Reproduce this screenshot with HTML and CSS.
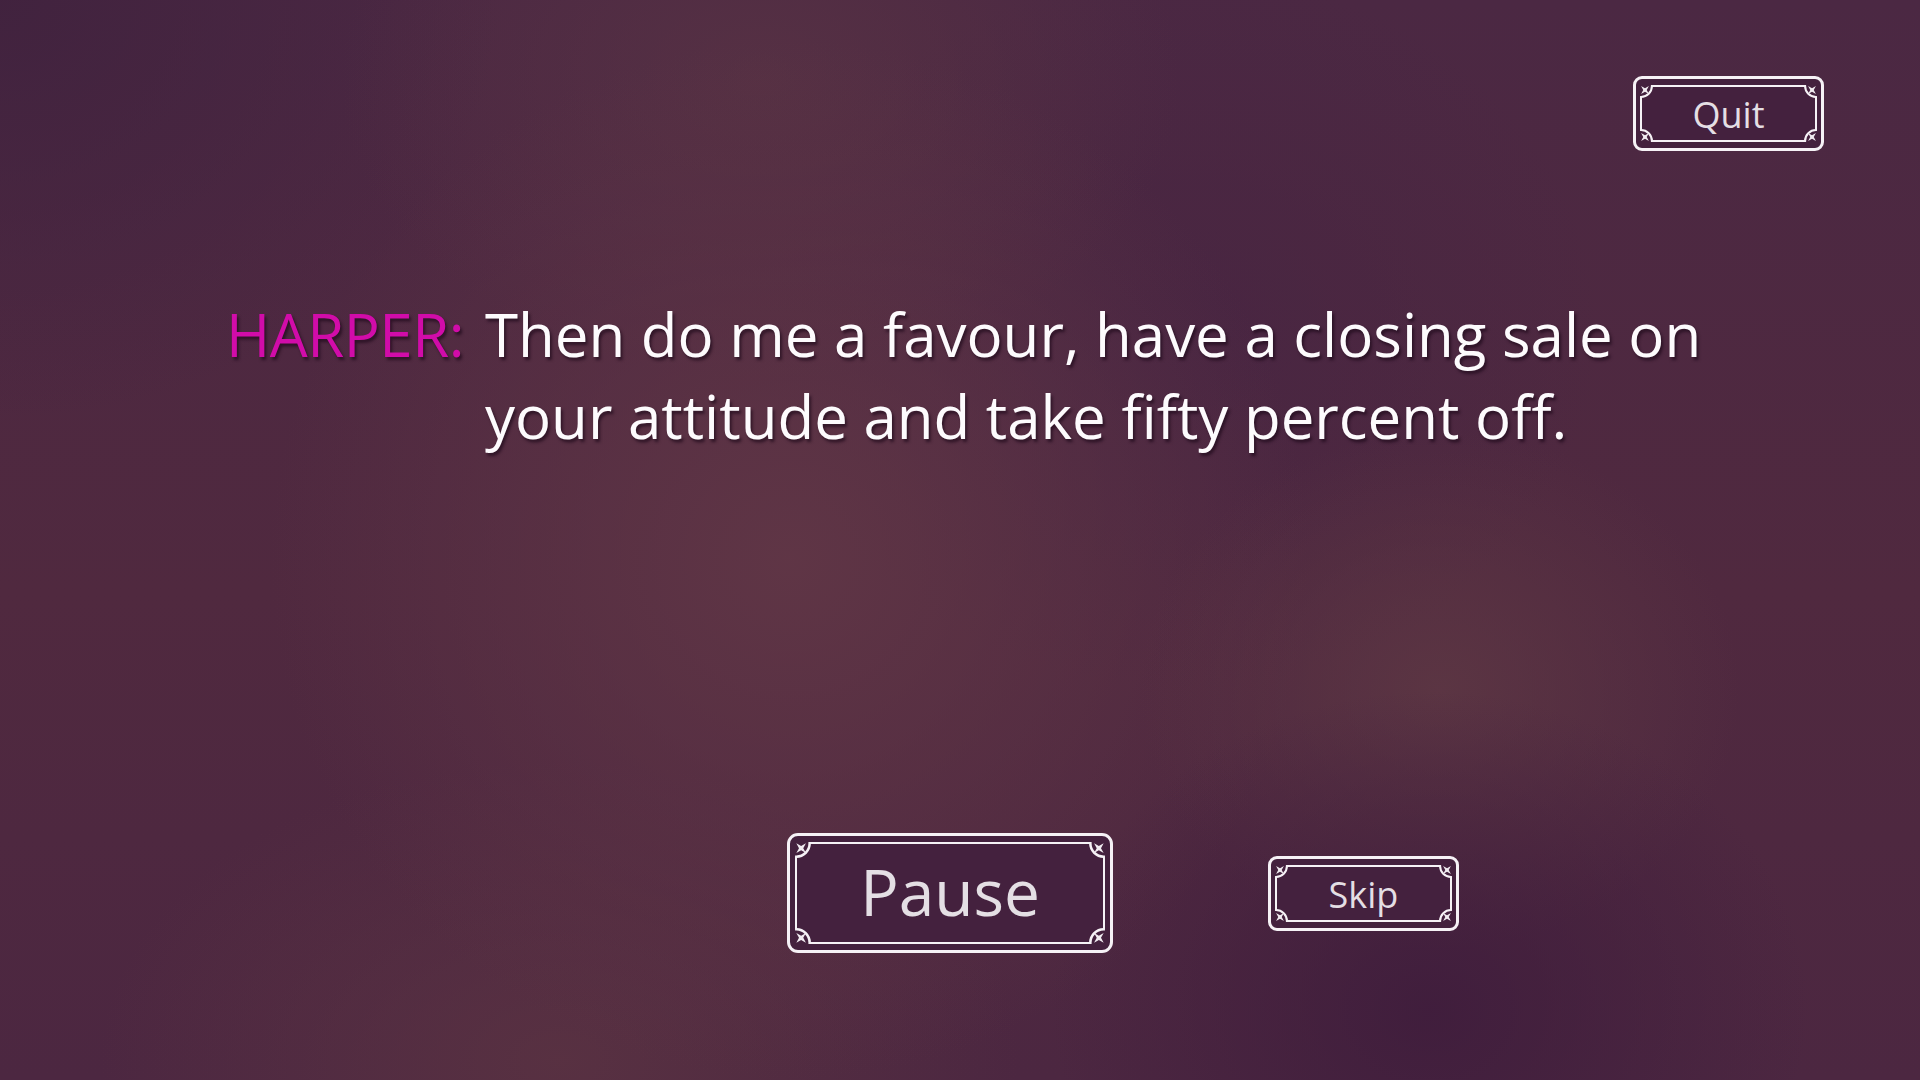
FILE: index.html
```html
<!DOCTYPE html>
<html lang="en">
<head>
<meta charset="utf-8">
<title>Harper</title>
<link rel="stylesheet" href="styles.css">
</head>
<body>
<div class="screen">
  <header class="topbar">
    <button class="frame-btn small" type="button">
      <span class="frame-inner">
        <span class="label">Quit</span>
        <svg class="orn tl" viewBox="0 0 12 12"><rect width="11" height="11"/><path class="arc" d="M11 1 A10 10 0 0 1 1 11"/><path class="star" d="M1 1 L4.6 3 L8.2 1 L6.2 4.6 L8.2 8.2 L4.6 6.2 L1 8.2 L3 4.6 Z"/></svg>
        <svg class="orn tr" viewBox="0 0 12 12"><rect width="11" height="11"/><path class="arc" d="M11 1 A10 10 0 0 1 1 11"/><path class="star" d="M1 1 L4.6 3 L8.2 1 L6.2 4.6 L8.2 8.2 L4.6 6.2 L1 8.2 L3 4.6 Z"/></svg>
        <svg class="orn bl" viewBox="0 0 12 12"><rect width="11" height="11"/><path class="arc" d="M11 1 A10 10 0 0 1 1 11"/><path class="star" d="M1 1 L4.6 3 L8.2 1 L6.2 4.6 L8.2 8.2 L4.6 6.2 L1 8.2 L3 4.6 Z"/></svg>
        <svg class="orn br" viewBox="0 0 12 12"><rect width="11" height="11"/><path class="arc" d="M11 1 A10 10 0 0 1 1 11"/><path class="star" d="M1 1 L4.6 3 L8.2 1 L6.2 4.6 L8.2 8.2 L4.6 6.2 L1 8.2 L3 4.6 Z"/></svg>
      </span>
    </button>
  </header>

  <section class="dialog">
    <span class="speaker">HARPER:</span>
    <p class="line">Then do me a favour, have a closing sale on your attitude and take fifty percent off.</p>
  </section>

  <nav class="controls">
    <button class="frame-btn large" type="button">
      <span class="frame-inner">
        <span class="label">Pause</span>
        <svg class="orn tl" viewBox="0 0 12 12"><rect width="11" height="11"/><path class="arc" d="M11 1 A10 10 0 0 1 1 11"/><path class="star" d="M1 1 L4.6 3 L8.2 1 L6.2 4.6 L8.2 8.2 L4.6 6.2 L1 8.2 L3 4.6 Z"/></svg>
        <svg class="orn tr" viewBox="0 0 12 12"><rect width="11" height="11"/><path class="arc" d="M11 1 A10 10 0 0 1 1 11"/><path class="star" d="M1 1 L4.6 3 L8.2 1 L6.2 4.6 L8.2 8.2 L4.6 6.2 L1 8.2 L3 4.6 Z"/></svg>
        <svg class="orn bl" viewBox="0 0 12 12"><rect width="11" height="11"/><path class="arc" d="M11 1 A10 10 0 0 1 1 11"/><path class="star" d="M1 1 L4.6 3 L8.2 1 L6.2 4.6 L8.2 8.2 L4.6 6.2 L1 8.2 L3 4.6 Z"/></svg>
        <svg class="orn br" viewBox="0 0 12 12"><rect width="11" height="11"/><path class="arc" d="M11 1 A10 10 0 0 1 1 11"/><path class="star" d="M1 1 L4.6 3 L8.2 1 L6.2 4.6 L8.2 8.2 L4.6 6.2 L1 8.2 L3 4.6 Z"/></svg>
      </span>
    </button>
    <button class="frame-btn small" type="button">
      <span class="frame-inner">
        <span class="label">Skip</span>
        <svg class="orn tl" viewBox="0 0 12 12"><rect width="11" height="11"/><path class="arc" d="M11 1 A10 10 0 0 1 1 11"/><path class="star" d="M1 1 L4.6 3 L8.2 1 L6.2 4.6 L8.2 8.2 L4.6 6.2 L1 8.2 L3 4.6 Z"/></svg>
        <svg class="orn tr" viewBox="0 0 12 12"><rect width="11" height="11"/><path class="arc" d="M11 1 A10 10 0 0 1 1 11"/><path class="star" d="M1 1 L4.6 3 L8.2 1 L6.2 4.6 L8.2 8.2 L4.6 6.2 L1 8.2 L3 4.6 Z"/></svg>
        <svg class="orn bl" viewBox="0 0 12 12"><rect width="11" height="11"/><path class="arc" d="M11 1 A10 10 0 0 1 1 11"/><path class="star" d="M1 1 L4.6 3 L8.2 1 L6.2 4.6 L8.2 8.2 L4.6 6.2 L1 8.2 L3 4.6 Z"/></svg>
        <svg class="orn br" viewBox="0 0 12 12"><rect width="11" height="11"/><path class="arc" d="M11 1 A10 10 0 0 1 1 11"/><path class="star" d="M1 1 L4.6 3 L8.2 1 L6.2 4.6 L8.2 8.2 L4.6 6.2 L1 8.2 L3 4.6 Z"/></svg>
      </span>
    </button>
  </nav>
</div>
</body>
</html>
```

FILE: styles.css
```css
* { box-sizing: border-box; }

html, body {
  margin: 0;
  height: 100%;
}

body {
  font-family: "Open Sans", "Noto Sans", sans-serif;
  background: #4a2842;
  overflow: hidden;
}

/* full-screen stage with soft, blotchy purple lighting */
.screen {
  width: 1920px;
  height: 1080px;
  display: flex;
  flex-direction: column;
  background:
    radial-gradient(ellipse 380px 320px at 1430px 1010px, rgba(62, 28, 60, 0.85), rgba(62, 28, 60, 0) 100%),
    radial-gradient(ellipse 300px 260px at 1440px 690px, rgba(94, 56, 68, 0.8), rgba(94, 56, 68, 0) 100%),
    radial-gradient(ellipse 520px 520px at 790px 560px, rgba(96, 54, 70, 0.95), rgba(96, 54, 70, 0) 100%),
    radial-gradient(ellipse 420px 300px at 760px 80px, rgba(90, 52, 68, 0.7), rgba(90, 52, 68, 0) 100%),
    radial-gradient(ellipse 460px 300px at 560px 1060px, rgba(92, 52, 66, 0.75), rgba(92, 52, 66, 0) 100%),
    radial-gradient(ellipse 500px 420px at 0px 0px, rgba(64, 34, 62, 0.9), rgba(64, 34, 62, 0) 100%),
    radial-gradient(ellipse 420px 360px at 1180px 330px, rgba(70, 36, 66, 0.7), rgba(70, 36, 66, 0) 100%),
    linear-gradient(180deg, #4b2843 0%, #50293f 55%, #4c2741 100%);
}

.topbar {
  display: flex;
  justify-content: flex-end;
  padding: 76px 96px 0 0;
}

/* dialogue line */
.dialog {
  display: flex;
  align-items: flex-start;
  margin-top: 142px;
  padding-left: 226px;
  font-size: 60px;
  line-height: 82px;
  text-shadow: 2px 3px 3px rgba(28, 8, 24, 0.65);
}

.speaker {
  color: #d10ca9;
  white-space: nowrap;
  letter-spacing: -0.5px;
  margin-right: 21px;
}

.line {
  margin: 0;
  width: 1260px;
  color: #fdfbfd;
}

/* bottom controls */
.controls {
  display: flex;
  align-items: center;
  gap: 155px;
  margin-top: 376px;
  padding-left: 787px;
}

/* framed buttons: outer rounded rule + inner rule with notched corners */
.frame-btn {
  display: flex;
  padding: 6px 4px;
  border: 3px solid #f6f2f6;
  border-radius: 9px;
  background: #44213e;
  font-family: inherit;
  color: #e4dfe4;
  cursor: pointer;
}

.frame-btn.small {
  width: 191px;
  height: 75px;
  font-size: 36px;
}

.frame-btn.small .label {
  padding-top: 3px;
}

.frame-btn.large {
  width: 326px;
  height: 120px;
  padding: 6px 5px;
  border-radius: 11px;
  font-size: 64px;
}

.frame-btn.large .label {
  padding-bottom: 2px;
}

.frame-inner {
  position: relative;
  flex: 1;
  display: flex;
  align-items: center;
  justify-content: center;
  border: 2px solid #f6f2f6;
}

.label {
  line-height: 1;
}

.orn {
  position: absolute;
  width: 13px;
  height: 13px;
  overflow: visible;
}

.large .orn {
  width: 16px;
  height: 16px;
}

.orn rect { fill: #44213e; }
.orn .arc {
  fill: none;
  stroke: #f6f2f6;
  stroke-width: 1.9;
  stroke-linecap: square;
}
.orn .star { fill: #f1ecf1; }

.orn.tl { top: -2px; left: -2px; }
.orn.tr { top: -2px; right: -2px; transform: scaleX(-1); }
.orn.bl { bottom: -2px; left: -2px; transform: scaleY(-1); }
.orn.br { bottom: -2px; right: -2px; transform: scale(-1, -1); }
```
